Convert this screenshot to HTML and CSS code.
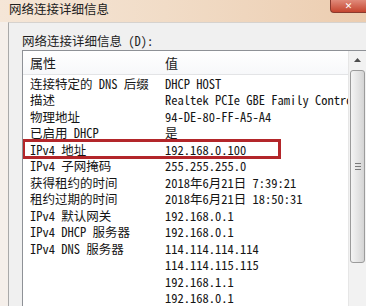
FILE: index.html
```html
<!DOCTYPE html>
<html lang="zh-CN">
<head>
    <meta charset="UTF-8">
    <title>网络连接详细信息</title>
    <link rel="stylesheet" href="styles.css">
</head>
<body>
    <div class="window">
        <div class="titlebar">
            <span class="title">网络连接详细信息</span>
            <button class="close-btn">✕</button>
        </div>

        <div class="frame">
            <div class="dialog">
                <div class="label">网络连接详细信息 (D):</div>

                <div class="listbox">
                    <div class="list-main">
                        <div class="list-head">
                            <span class="col-name">属性</span>
                            <span class="col-value">值</span>
                        </div>
                        <div class="row"><span class="col-name">连接特定的 DNS 后缀</span><span class="col-value">DHCP HOST</span></div>
                        <div class="row"><span class="col-name">描述</span><span class="col-value">Realtek PCIe GBE Family Controller</span></div>
                        <div class="row"><span class="col-name">物理地址</span><span class="col-value">94-DE-80-FF-A5-A4</span></div>
                        <div class="row"><span class="col-name">已启用 DHCP</span><span class="col-value">是</span></div>
                        <div class="row marked"><span class="col-name">IPv4 地址</span><span class="col-value">192.168.0.100</span></div>
                        <div class="row"><span class="col-name">IPv4 子网掩码</span><span class="col-value">255.255.255.0</span></div>
                        <div class="row"><span class="col-name">获得租约的时间</span><span class="col-value">2018年6月21日 7:39:21</span></div>
                        <div class="row"><span class="col-name">租约过期的时间</span><span class="col-value">2018年6月21日 18:50:31</span></div>
                        <div class="row"><span class="col-name">IPv4 默认网关</span><span class="col-value">192.168.0.1</span></div>
                        <div class="row"><span class="col-name">IPv4 DHCP 服务器</span><span class="col-value">192.168.0.1</span></div>
                        <div class="row"><span class="col-name">IPv4 DNS 服务器</span><span class="col-value">114.114.114.114</span></div>
                        <div class="row"><span class="col-name"></span><span class="col-value">114.114.115.115</span></div>
                        <div class="row"><span class="col-name"></span><span class="col-value">192.168.1.1</span></div>
                        <div class="row"><span class="col-name"></span><span class="col-value">192.168.0.1</span></div>
                    </div>

                    <div class="scrollbar">
                        <div class="scroll-arrow">
                            <svg width="7" height="4" viewBox="0 0 7 4"><path d="M0 4 L3.5 0 L7 4 Z" fill="#4d4d4d"/></svg>
                        </div>
                        <div class="scroll-thumb">
                            <span class="grip"></span>
                            <span class="grip"></span>
                            <span class="grip"></span>
                        </div>
                    </div>
                </div>
            </div>
        </div>
    </div>
</body>
</html>
```

FILE: styles.css
```css
body {
    margin: 0;
    width: 366px;
    height: 306px;
    overflow: hidden;
    font-family: "Noto Sans Mono CJK SC", "Noto Sans CJK SC", monospace;
    background: #f3ece6;
}

.window {
    display: flex;
    flex-direction: column;
    height: 306px;
}

.titlebar {
    height: 22px;
    flex-shrink: 0;
    display: flex;
    align-items: flex-start;
    justify-content: space-between;
    background: linear-gradient(to right, #f5e6d7 0%, #f1dcc7 45%, #eccdb0 100%);
}

.title {
    font-size: 12.5px;
    line-height: 16px;
    color: #202020;
    margin: 1px 0 0 9px;
}

.close-btn {
    width: 36px;
    height: 13px;
    border: 1px solid #8a3a2e;
    border-top: none;
    border-right: none;
    border-radius: 0 0 0 4px;
    background: linear-gradient(to bottom, #e08a7a, #c5452f);
    color: #fff;
    font-size: 9px;
    line-height: 11px;
    padding: 0;
    font-family: "DejaVu Sans", sans-serif;
    font-weight: bold;
}

.frame {
    flex: 1;
    display: flex;
    padding-left: 8px;
    background: #f5efea;
}

.dialog {
    flex: 1;
    min-width: 0;
    background: #f0f0f0;
    border-left: 1px solid #a9a9a9;
    border-top: 1px solid #d6d2ce;
    padding: 10px 0 0 13px;
    display: flex;
    flex-direction: column;
}

.label {
    font-size: 12.5px;
    line-height: 16px;
    color: #1e1e1e;
    margin-bottom: 1px;
}

.listbox {
    flex: 1;
    display: flex;
    border: 1px solid #8e9196;
    border-right: none;
    border-bottom: none;
    background: #fff;
    overflow: hidden;
}

.list-main {
    flex: 1;
    min-width: 0;
    overflow: hidden;
}

.list-head {
    display: flex;
    height: 23px;
    align-items: center;
    background: linear-gradient(to bottom, #ffffff, #f7f8fa);
    border-bottom: 1px solid #e3e4e6;
    font-size: 13px;
    line-height: 16px;
    color: #1a1a1a;
}

.row {
    position: relative;
    display: flex;
    height: 16.5px;
    align-items: center;
    font-size: 12.5px;
    line-height: 15px;
    color: #151515;
    white-space: nowrap;
}

.col-name {
    width: 135px;
    flex-shrink: 0;
    padding-left: 7px;
}

.col-value {
    white-space: nowrap;
}

.marked::after {
    content: "";
    position: absolute;
    left: -1px;
    top: -2px;
    width: 253px;
    height: 14px;
    border: 3px solid #b3262a;
}

.scrollbar {
    width: 17px;
    flex-shrink: 0;
    display: flex;
    flex-direction: column;
    align-items: center;
    background: #f2f2f2;
    border-left: 1px solid #e6e6e6;
}

.scroll-arrow {
    height: 18px;
    width: 15px;
    display: flex;
    align-items: center;
    justify-content: center;
}

.scroll-thumb {
    width: 13px;
    height: 191px;
    margin-top: 1px;
    border: 1px solid #9b9b9b;
    border-radius: 3px;
    background: linear-gradient(to right, #f4f4f4, #e2e2e2 60%, #d4d4d4);
    display: flex;
    flex-direction: column;
    justify-content: center;
    align-items: center;
    gap: 2px;
}

.grip {
    width: 6px;
    height: 1px;
    background: #7a7a7a;
}
```
